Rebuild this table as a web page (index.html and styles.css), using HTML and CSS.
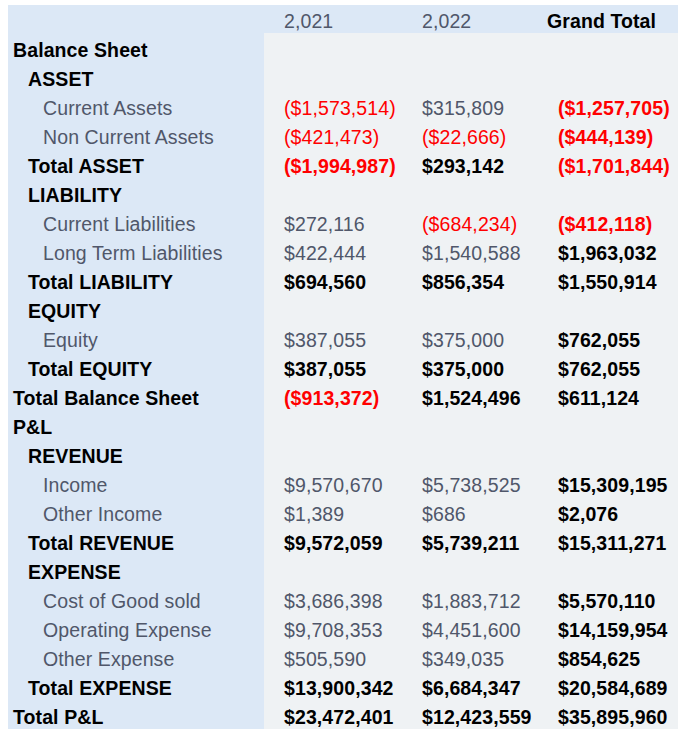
FILE: index.html
```html
<!DOCTYPE html>
<html>
<head>
<meta charset="utf-8">
<link rel="stylesheet" href="styles.css">
</head>
<body>
<div class="pivot">
  <div class="row head">
    <div class="c lbl"></div>
    <div class="c v">2,021</div>
    <div class="c v">2,022</div>
    <div class="c gt">Grand Total</div>
  </div>
  <div class="row"><div class="c lbl l0 b">Balance Sheet</div><div class="c"></div><div class="c"></div><div class="c"></div></div>
  <div class="row"><div class="c lbl l1 b">ASSET</div><div class="c"></div><div class="c"></div><div class="c"></div></div>
  <div class="row"><div class="c lbl l2">Current Assets</div><div class="c v neg">($1,573,514)</div><div class="c v">$315,809</div><div class="c g b neg">($1,257,705)</div></div>
  <div class="row"><div class="c lbl l2">Non Current Assets</div><div class="c v neg">($421,473)</div><div class="c v neg">($22,666)</div><div class="c g b neg">($444,139)</div></div>
  <div class="row"><div class="c lbl l1 b">Total ASSET</div><div class="c v b neg">($1,994,987)</div><div class="c v b">$293,142</div><div class="c g b neg">($1,701,844)</div></div>
  <div class="row"><div class="c lbl l1 b">LIABILITY</div><div class="c"></div><div class="c"></div><div class="c"></div></div>
  <div class="row"><div class="c lbl l2">Current Liabilities</div><div class="c v">$272,116</div><div class="c v neg">($684,234)</div><div class="c g b neg">($412,118)</div></div>
  <div class="row"><div class="c lbl l2">Long Term Liabilities</div><div class="c v">$422,444</div><div class="c v">$1,540,588</div><div class="c g b">$1,963,032</div></div>
  <div class="row"><div class="c lbl l1 b">Total LIABILITY</div><div class="c v b">$694,560</div><div class="c v b">$856,354</div><div class="c g b">$1,550,914</div></div>
  <div class="row"><div class="c lbl l1 b">EQUITY</div><div class="c"></div><div class="c"></div><div class="c"></div></div>
  <div class="row"><div class="c lbl l2">Equity</div><div class="c v">$387,055</div><div class="c v">$375,000</div><div class="c g b">$762,055</div></div>
  <div class="row"><div class="c lbl l1 b">Total EQUITY</div><div class="c v b">$387,055</div><div class="c v b">$375,000</div><div class="c g b">$762,055</div></div>
  <div class="row"><div class="c lbl l0 b">Total Balance Sheet</div><div class="c v b neg">($913,372)</div><div class="c v b">$1,524,496</div><div class="c g b">$611,124</div></div>
  <div class="row"><div class="c lbl l0 b">P&amp;L</div><div class="c"></div><div class="c"></div><div class="c"></div></div>
  <div class="row"><div class="c lbl l1 b">REVENUE</div><div class="c"></div><div class="c"></div><div class="c"></div></div>
  <div class="row"><div class="c lbl l2">Income</div><div class="c v">$9,570,670</div><div class="c v">$5,738,525</div><div class="c g b">$15,309,195</div></div>
  <div class="row"><div class="c lbl l2">Other Income</div><div class="c v">$1,389</div><div class="c v">$686</div><div class="c g b">$2,076</div></div>
  <div class="row"><div class="c lbl l1 b">Total REVENUE</div><div class="c v b">$9,572,059</div><div class="c v b">$5,739,211</div><div class="c g b">$15,311,271</div></div>
  <div class="row"><div class="c lbl l1 b">EXPENSE</div><div class="c"></div><div class="c"></div><div class="c"></div></div>
  <div class="row"><div class="c lbl l2">Cost of Good sold</div><div class="c v">$3,686,398</div><div class="c v">$1,883,712</div><div class="c g b">$5,570,110</div></div>
  <div class="row"><div class="c lbl l2">Operating Expense</div><div class="c v">$9,708,353</div><div class="c v">$4,451,600</div><div class="c g b">$14,159,954</div></div>
  <div class="row"><div class="c lbl l2">Other Expense</div><div class="c v">$505,590</div><div class="c v">$349,035</div><div class="c g b">$854,625</div></div>
  <div class="row"><div class="c lbl l1 b">Total EXPENSE</div><div class="c v b">$13,900,342</div><div class="c v b">$6,684,347</div><div class="c g b">$20,584,689</div></div>
  <div class="row"><div class="c lbl l0 b">Total P&amp;L</div><div class="c v b">$23,472,401</div><div class="c v b">$12,423,559</div><div class="c g b">$35,895,960</div></div>
</div>
</body>
</html>
```
FILE: styles.css
```css
html, body {
  margin: 0;
  padding: 0;
  background: #ffffff;
}
body {
  font-family: "Liberation Sans", Arial, sans-serif;
  font-size: 19.5px;
  color: #50576a;
}
.pivot {
  margin: 5px 0 0 8px;
  width: 670px;
}
.row {
  display: grid;
  grid-template-columns: 256px 138px 136px 140px;
  height: 29px;
  background: #eff2f4;
}
.row.head {
  height: 28px;
  background: #dce8f6;
}
.c {
  box-sizing: border-box;
  padding-top: 5px;
  line-height: 24px;
  white-space: nowrap;
  overflow: hidden;
  letter-spacing: 0.1px;
}
.head .c {
  padding-top: 4px;
}
.lbl {
  background: #dce8f6;
}
.l0 { padding-left: 5px; }
.l1 { padding-left: 20px; }
.l2 { padding-left: 35px; }
.v { padding-left: 20px; }
.g { padding-left: 20px; }
.gt {
  padding-left: 9px;
  font-weight: bold;
  color: #000000;
}
.b {
  font-weight: bold;
  color: #000000;
}
.neg {
  color: #ff0000;
}
```
